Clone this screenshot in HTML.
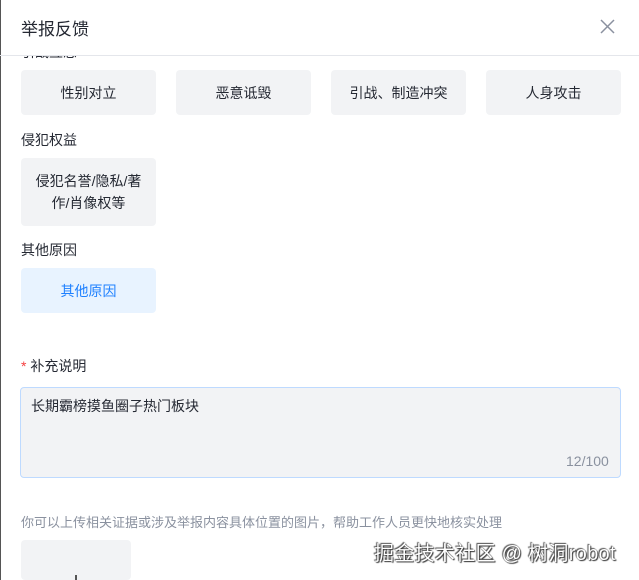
<!DOCTYPE html><html><head><meta charset="utf-8"><style>
body{margin:0;width:639px;height:580px;overflow:hidden;background:#fff;font-family:"Liberation Sans","Noto Sans CJK SC",sans-serif;position:relative;color:#252933}
.a{position:absolute}
.btn{position:absolute;background:#f2f3f5;border-radius:4px;width:135px;height:45px;display:flex;align-items:center;justify-content:center;font-size:14px;color:#252933;text-align:center;line-height:22px}
.lab{position:absolute;left:21px;font-size:14px;color:#252933}
</style></head><body>
<div class="a" style="left:0;top:0;width:1px;height:580px;background:#555"></div>
<div class="a" style="left:21px;top:15px;font-size:17px;color:#252933">举报反馈</div>
<svg class="a" style="left:600px;top:19px" width="15" height="15" viewBox="0 0 15 15"><path d="M1 1L14 14M14 1L1 14" stroke="#8a919f" stroke-width="1.5"/></svg>
<div class="a" style="left:0;top:55px;width:639px;height:1px;background:#e4e6eb"></div>
<div class="lab" style="top:56px;height:4px;overflow:hidden"><span style="position:relative;top:-14px">引战互怼</span></div>
<div class="btn" style="left:21px;top:70px">性别对立</div>
<div class="btn" style="left:176px;top:70px">恶意诋毁</div>
<div class="btn" style="left:331px;top:70px">引战、制造冲突</div>
<div class="btn" style="left:486px;top:70px">人身攻击</div>
<div class="lab" style="top:130px">侵犯权益</div>
<div class="btn" style="left:21px;top:158px;height:68px">侵犯名誉/隐私/著<br>作/肖像权等</div>
<div class="lab" style="top:240px">其他原因</div>
<div class="btn" style="left:21px;top:268px;background:#e8f3ff;color:#1e80ff">其他原因</div>
<div class="lab" style="top:356px"><span style="color:#f53f3f">*</span> 补充说明</div>
<div class="a" style="left:20px;top:387px;width:599px;height:89px;background:#f2f3f5;border:1px solid #bedaff;border-radius:4px"></div>
<div class="a" style="left:31px;top:396px;font-size:14px">长期霸榜摸鱼圈子热门板块</div>
<div class="a" style="left:566px;top:453px;font-size:14px;color:#8a919f">12/100</div>
<div class="a" style="left:21px;top:512px;font-size:13px;color:#8a919f">你可以上传相关证据或涉及举报内容具体位置的图片，帮助工作人员更快地核实处理</div>
<div class="a" style="left:21px;top:540px;width:110px;height:40px;background:#f2f3f5;border-radius:4px"></div>
<div class="a" style="left:75px;top:575px;width:2px;height:5px;background:#555"></div>
<div class="a" style="left:374px;top:537px;font-size:20px;letter-spacing:0.3px;color:#fff;text-shadow:0 0 1px #333,1px 1px 1px #333,-1px -1px 1px #555">掘金技术社区 @ 树洞robot</div>
</body></html>
